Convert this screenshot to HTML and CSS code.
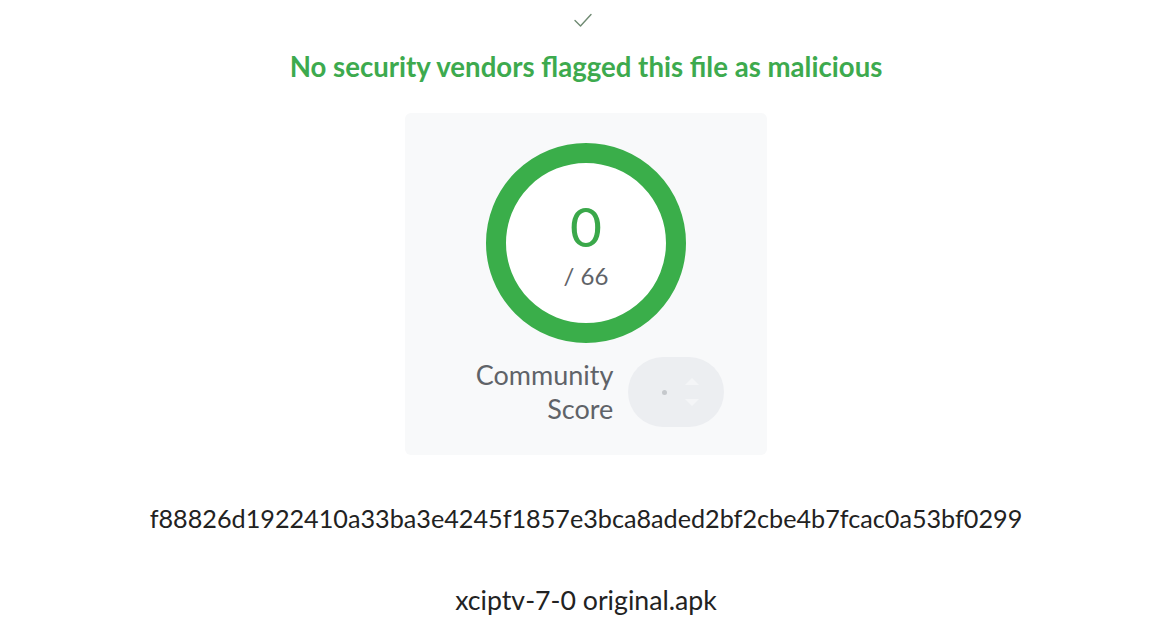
FILE: index.html
```html
<!DOCTYPE html>
<html lang="en">
<head>
<meta charset="utf-8">
<title>Scan result</title>
<link rel="stylesheet" href="styles.css">
</head>
<body>
<main class="page">
  <svg class="check" width="24" height="16" viewBox="0 0 24 16" aria-hidden="true">
    <path d="M1 8.5 L6.5 14 L17 2.5" fill="none" stroke="#6f8a72" stroke-width="1.4" stroke-linecap="round" stroke-linejoin="round"/>
  </svg>
  <h1 class="verdict">No security vendors flagged this file as malicious</h1>
  <section class="card">
    <div class="gauge">
      <div class="gauge-inner">
        <span class="positives">0</span>
        <span class="total">/ 66</span>
      </div>
    </div>
    <div class="community">
      <div class="community-label">Community<br>Score</div>
      <div class="vote">
        <span class="vote-dot"></span>
        <span class="vote-arrows">
          <span class="arrow up"></span>
          <span class="arrow down"></span>
        </span>
      </div>
    </div>
  </section>
  <div class="hash">f88826d1922410a33ba3e4245f1857e3bca8aded2bf2cbe4b7fcac0a53bf0299</div>
  <div class="filename">xciptv-7-0 original.apk</div>
</main>
</body>
</html>
```

FILE: styles.css
```css
html, body {
  margin: 0;
  padding: 0;
  background: #ffffff;
}

body {
  font-family: "Lato", "Source Sans Pro", "Noto Sans", sans-serif;
  width: 1162px;
  height: 620px;
  overflow: hidden;
}

.page {
  display: flex;
  flex-direction: column;
  align-items: center;
  padding-left: 10px;
  padding-top: 12px;
}

.check {
  display: block;
}

.verdict {
  margin: 24px 0 0 0;
  font-size: 27.6px;
  line-height: 30px;
  font-weight: 700;
  color: #3daa4e;
  letter-spacing: 0;
}

.card {
  margin-top: 31px;
  width: 362px;
  height: 342px;
  box-sizing: border-box;
  background: #f8f9fa;
  border-radius: 6px;
  display: flex;
  flex-direction: column;
  align-items: center;
  padding-top: 30px;
}

.gauge {
  width: 200px;
  height: 200px;
  box-sizing: border-box;
  border: 20px solid #3aae4a;
  border-radius: 50%;
  background: #ffffff;
  display: flex;
  align-items: center;
  justify-content: center;
}

.gauge-inner {
  display: flex;
  flex-direction: column;
  align-items: center;
  margin-top: 2px;
}

.positives {
  font-size: 55px;
  line-height: 56px;
  color: #3aa84a;
  font-weight: 400;
}

.total {
  font-size: 24px;
  line-height: 28px;
  color: #5f6368;
  margin-top: 8px;
}

.community {
  margin-top: 14px;
  display: flex;
  align-items: center;
  gap: 15px;
  margin-left: 28px;
}

.community-label {
  text-align: right;
  font-size: 27px;
  line-height: 34px;
  color: #5f6368;
}

.vote {
  width: 96px;
  height: 70px;
  border-radius: 35px;
  background: #eceef1;
  display: flex;
  align-items: center;
  justify-content: space-between;
  padding: 0 25px 0 34px;
  box-sizing: border-box;
}

.vote-dot {
  width: 5px;
  height: 5px;
  border-radius: 50%;
  background: #c5c8cc;
}

.vote-arrows {
  display: flex;
  flex-direction: column;
  gap: 14px;
}

.arrow {
  width: 0;
  height: 0;
  border-left: 7px solid transparent;
  border-right: 7px solid transparent;
}

.arrow.up {
  border-bottom: 7px solid #f4f5f7;
}

.arrow.down {
  border-top: 7px solid #f4f5f7;
}

.hash {
  margin-top: 48px;
  font-size: 25.2px;
  line-height: 30px;
  color: #222222;
}

.filename {
  margin-top: 52px;
  font-size: 26.7px;
  line-height: 30px;
  color: #222222;
}
```
